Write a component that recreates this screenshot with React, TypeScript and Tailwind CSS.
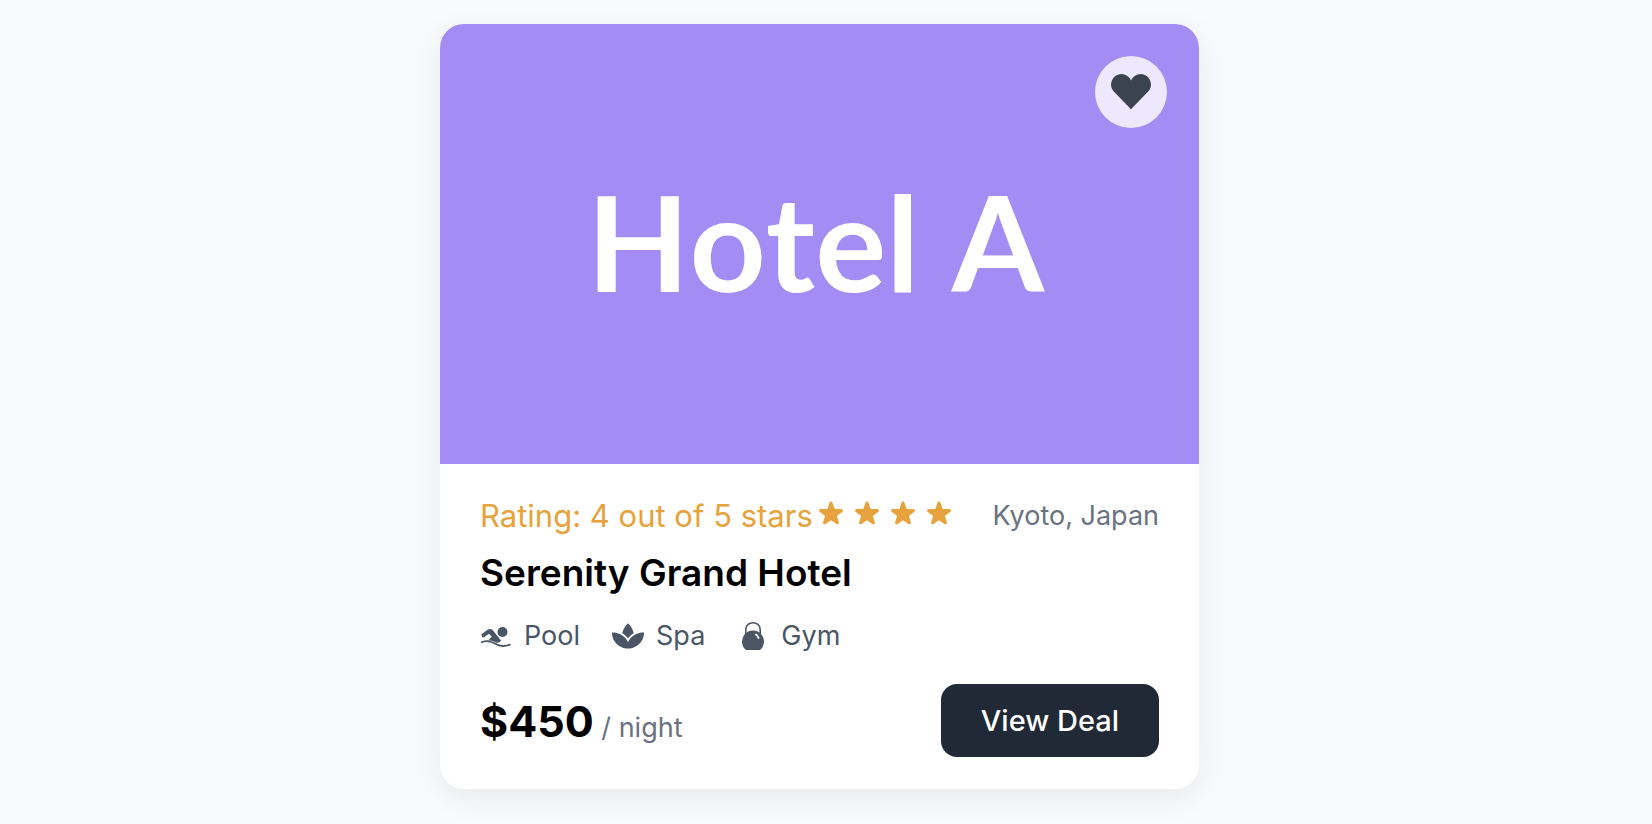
import { FaSpa } from 'react-icons/fa';

const HeartIcon = () => (
    <svg className="size-12" viewBox="0 0 24 24" fill="currentColor" aria-hidden="true">
        <path d="M12 6.200 A5.200 5.200 0 1 0 3.520 11.900 L12 20.600 L20.480 11.900 A5.200 5.200 0 1 0 12 6.200 Z" />
    </svg>
);

const PoolIcon = () => (
    <svg className="size-8" viewBox="0 0 32 32" fill="currentColor" aria-hidden="true">
        <circle cx="22.500" cy="12" r="5" />
        <path d="M1.500 14.200 L7.500 9.800 Q10.500 8 13 10.500 L21 20.500 Q20 23.200 16.500 22.800 Q12.500 20.500 8.500 20.200 L11.800 16.800 L9 13.800 L3.500 17.600 Q1.500 17.500 1.500 14.200 Z" />
        <path d="M1 22.500 Q5 20.300 10 21.500 Q14 22.800 17 24.600 Q23 27.500 30.500 24.400" fill="none" stroke="currentColor" strokeWidth="1.800" />
    </svg>
);

const GymIcon = () => (
    <svg className="size-8" viewBox="0 0 32 32" aria-hidden="true">
        <path d="M8.800 14 V9.500 C8.800 0.500 23.200 0.500 23.200 9.500 V14" fill="none" stroke="currentColor" strokeWidth="1.600" />
        <path d="M9 30 A11 11 0 1 1 23 30 Z" fill="currentColor" />
        <path d="M19 14.500 Q20.800 15.800 21.500 18" fill="none" stroke="white" strokeWidth="1.800" strokeLinecap="round" />
    </svg>
);

const StarIcon = () => (
    <svg className="size-8" viewBox="0 0 20 20" fill="currentColor" aria-hidden="true">
        <path d="M9.049 2.927c.3-.921 1.603-.921 1.902 0l1.07 3.292a1 1 0 00.95.69h3.462c.969 0 1.371 1.24.588 1.81l-2.8 2.034a1 1 0 00-.364 1.118l1.07 3.292c.3.921-.755 1.688-1.54 1.118l-2.8-2.034a1 1 0 00-1.175 0l-2.8 2.034c-.784.57-1.838-.197-1.539-1.118l1.07-3.292a1 1 0 00-.364-1.118L2.98 8.72c-.783-.57-.38-1.81.588-1.81h3.461a1 1 0 00.951-.69l1.07-3.292z" />
    </svg>
);

const amenities = [
    { name: 'Pool', icon: <PoolIcon /> },
    { name: 'Spa', icon: <FaSpa className="size-8" aria-hidden="true" /> },
    { name: 'Gym', icon: <GymIcon /> },
];

const HotelCard = () => {
    return (
        <article className="w-full max-w-[759px] overflow-hidden rounded-3xl bg-white shadow-[0_8px_32px_rgba(0,0,0,0.07)]">
            <div className="relative flex h-[440px] items-center justify-center bg-[#a38cf4]">
                <span className="pr-2 pb-2 font-['Lato',sans-serif] text-[133px] leading-none font-bold text-white [font-kerning:none]">Hotel A</span>
                <button
                    type="button"
                    aria-label="Save to favorites"
                    className="absolute top-8 right-8 flex size-[72px] items-center justify-center rounded-full bg-white/80 text-[#3b4250]"
                >
                    <HeartIcon />
                </button>
            </div>

            <div className="px-10 py-8">
                <div className="flex items-center justify-between">
                    <div className="flex items-center gap-0.5 text-[#e6a23c]">
                        <span className="text-[31px] leading-10">Rating: 4 out of 5 stars</span>
                        <div className="flex gap-1 pb-1">
                            {[...Array(4)].map((_, i) => (
                                <StarIcon key={i} />
                            ))}
                        </div>
                    </div>
                    <span className="text-[27px] leading-10 text-gray-500">Kyoto, Japan</span>
                </div>

                <h2 className="mt-2 text-[37px] leading-[58px] font-semibold text-black">Serenity Grand Hotel</h2>

                <ul className="mt-3.5 flex gap-8 text-[27px] leading-10 text-gray-600">
                    {amenities.map(({ name, icon }) => (
                        <li key={name} className="flex items-center gap-3">
                            {icon}
                            {name}
                        </li>
                    ))}
                </ul>

                <div className="mt-7 flex items-end justify-between">
                    <p className="pb-1 text-[27px] text-gray-500">
                        <span className="text-[43px] font-bold text-black">$450</span> / night
                    </p>
                    <button type="button" className="rounded-2xl bg-[#222936] px-10 py-4 text-[29px] leading-[41px] font-medium text-white">
                        View Deal
                    </button>
                </div>
            </div>
        </article>
    );
};

export default function App() {
    return (
        <main className="flex min-h-screen items-start justify-center bg-[#f9fafc] pt-6 pr-[13px] font-['Inter',sans-serif]">
            <HotelCard />
        </main>
    );
}
